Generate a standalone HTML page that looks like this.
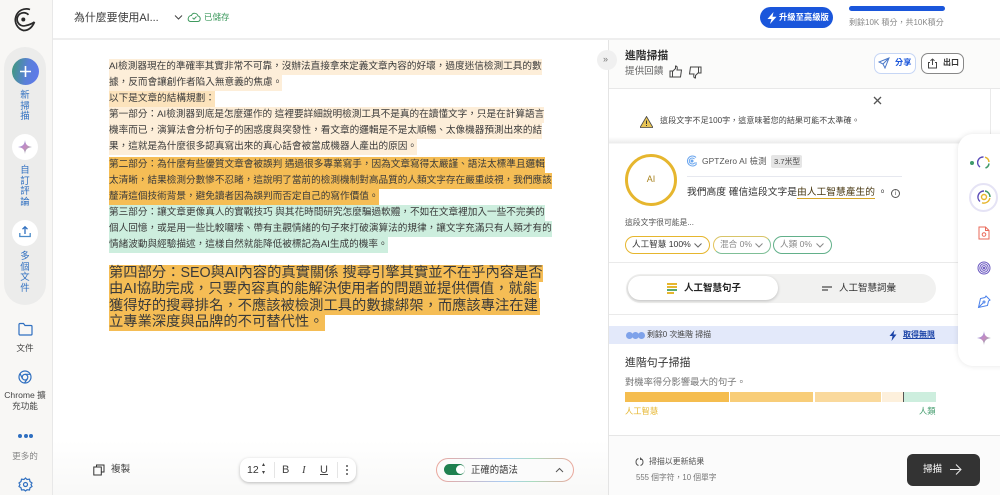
<!DOCTYPE html>
<html><head><meta charset="utf-8">
<style>
*{margin:0;padding:0;box-sizing:border-box}
html,body{width:1000px;height:495px;overflow:hidden;background:#fff}
body{position:relative;font-family:"Liberation Sans","Noto Sans CJK TC",sans-serif;color:#333}
#w{position:absolute;left:0;top:0;width:1000px;height:495px;filter:blur(.3px);overflow:hidden}
.a{position:absolute}
.t{position:absolute;white-space:nowrap}
.l{position:absolute;left:109px;height:16px;line-height:16px;font-size:9.65px;white-space:nowrap;color:#3a3a3a}
.c{text-align:center}
.v{color:#2f6fc0;font-size:9.4px;line-height:10.7px;text-align:center;position:absolute;left:15px;width:20px}
.pill{position:absolute;top:236px;height:18px;border-radius:10px;background:#fff;font-size:8.6px;line-height:15px;white-space:nowrap;padding-left:6px}
</style></head><body><div id="w">

<!-- sidebar -->
<div class="a" style="left:0;top:0;width:53px;height:495px;background:#f8f7f5;border-right:1px solid #e8e8e8"></div>
<svg class="a" style="left:10px;top:6px" width="27" height="27" viewBox="0 0 27 27" fill="none" stroke="#2a2a2a" stroke-width="1.7"><path d="M20 3.500A11 11 0 1 0 13.500 24.500C17 24.500 21.500 23 24.500 16"/><path d="M18.500 8.800A6.600 6.600 0 1 0 16 19.500C19 19 21.500 18 24.500 16"/><circle cx="13.300" cy="13.500" r="2" fill="#2a2a2a" stroke="none"/></svg>
<div class="a" style="left:4px;top:47px;width:42px;height:258px;background:#ececeb;border-radius:21px"></div>
<div class="a" style="left:12px;top:58px;width:27px;height:27px;border-radius:50%;background:linear-gradient(100deg,#3f9a78 0%,#5a7fd8 55%,#5f78ee 100%)"></div>
<svg class="a" style="left:12px;top:58px" width="27" height="27" fill="none" stroke="#fff" stroke-width="1.600"><path d="M13.500 8v11M8 13.500h11"/></svg>
<div class="v" style="top:90px">新<br>掃<br>描</div>
<div class="a" style="left:12px;top:134px;width:26px;height:26px;border-radius:50%;background:#fff"></div>
<svg class="a" style="left:18px;top:140px" width="14" height="14" viewBox="0 0 14 14"><path d="M7 0C7.500 4.500 9 6.300 14 7C9 7.700 7.500 9.500 7 14C6.500 9.500 5 7.700 0 7C5 6.300 6.500 4.500 7 0Z" fill="url(#g)"/><defs><linearGradient id="g" x1="0" y1="0" x2="1" y2="1"><stop offset="0" stop-color="#6b9cf0"/><stop offset=".5" stop-color="#c98ac0"/><stop offset="1" stop-color="#6cc09a"/></linearGradient></defs></svg>
<div class="v" style="top:165px">自<br>訂<br>評<br>論</div>
<div class="a" style="left:12px;top:220px;width:26px;height:26px;border-radius:50%;background:#fff"></div>
<svg class="a" style="left:18px;top:225px" width="14" height="14" fill="none" stroke-width="1.300"><path d="M7 9V2M4.500 4.200L7 1.800L9.500 4.200" stroke="#2f6fc0"/><path d="M1.800 8v3.500h10.400V8" stroke="#4a8ac8"/></svg>
<div class="v" style="top:251px">多<br>個<br>文<br>件</div>
<svg class="a" style="left:17px;top:321px" width="17" height="16" fill="none" stroke="#2f6fc0" stroke-width="1.200"><path d="M2 3.500Q2 2.500 3 2.500H6.500L8 4.500H14Q15 4.500 15 5.500V13Q15 14 14 14H3Q2 14 2 13Z"/></svg>
<div class="t c" style="left:0;width:50px;top:342px;font-size:8.600px;line-height:12px;color:#444">文件</div>
<svg class="a" style="left:18px;top:370px" width="15" height="15" fill="none" stroke="#2f6fc0" stroke-width="1.200"><circle cx="7" cy="7" r="6"/><circle cx="7" cy="7.200" r="2.800"/><path d="M7 4.300H12.500M4.500 8.700L2 3.500M9.400 8.800L6.500 13"/></svg>
<div class="t c" style="left:0;width:50px;top:390px;font-size:8.600px;line-height:11px;color:#444">Chrome 擴<br>充功能</div>
<div class="a" style="left:18px;top:434px;width:4px;height:4px;border-radius:50%;background:#2f6fc0"></div>
<div class="a" style="left:23.500px;top:434px;width:4px;height:4px;border-radius:50%;background:#2f6fc0"></div>
<div class="a" style="left:29px;top:434px;width:4px;height:4px;border-radius:50%;background:#2f6fc0"></div>
<div class="t c" style="left:0;width:50px;top:450px;font-size:8.600px;line-height:12px;color:#888">更多的</div>
<svg class="a" style="left:18px;top:477px" width="15" height="15" fill="none" stroke="#2f6fc0" stroke-width="1.200"><path d="M7.500 1L9 2.500L11.500 2.200L12 4.500L14 6L13 7.500L14 9.500L12 10.800L11.500 13L9 12.800L7.500 14L6 12.800L3.500 13L3 10.800L1 9.500L2 7.500L1 6L3 4.500L3.500 2.200L6 2.500Z"/><circle cx="7.500" cy="7.500" r="2"/></svg>

<!-- header -->
<div class="a" style="left:53px;top:38px;width:947px;height:2px;background:#eeeeee"></div>
<div class="t" style="left:74px;top:9px;font-size:10.900px;line-height:18px;color:#3a3a3a">為什麼要使用AI...</div>
<svg class="a" style="left:174px;top:14px" width="9" height="7" fill="none" stroke="#444" stroke-width="1"><path d="M1 1.500L4.500 5L8 1.500"/></svg>
<svg class="a" style="left:187px;top:12px" width="14" height="11" fill="none" stroke="#3f9a5f" stroke-width="1"><path d="M3.500 9.500H10.500C14 9.500 14 4.500 11 4C10 0.500 5.500 0.500 4.500 3.500C0.500 3.500 0 9.500 3.500 9.500Z"/><path d="M5.500 5.800L7 7.200L9.500 4.500"/></svg>
<div class="t" style="left:204px;top:11px;font-size:8.500px;line-height:12px;color:#3f9a5f">已儲存</div>
<div class="a" style="left:760px;top:7px;width:73px;height:21px;border-radius:11px;background:#1a56db"></div>
<svg class="a" style="left:767px;top:12px" width="10" height="12"><path d="M6.500 0L0.500 7H4.500L3 12L9.500 4.800H5.500Z" fill="#fff"/></svg>
<div class="t" style="left:779px;top:11px;font-size:8.300px;line-height:12px;color:#fff;font-weight:bold">升級至高級版</div>
<div class="a" style="left:849px;top:6px;width:96px;height:5px;border-radius:3px;background:#1a56db"></div>
<div class="t" style="left:849px;top:17px;font-size:8px;line-height:12px;color:#888">剩餘10K 積分，共10K積分</div>

<!-- editor -->
<div class="a" style="left:53px;top:440px;width:555px;height:55px;background:linear-gradient(#fff,#f8f8f7)"></div>
<div class="l" style="top:59px;background:#fdeed9">AI檢測器現在的準確率其實非常不可靠，沒辦法直接拿來定義文章內容的好壞，過度迷信檢測工具的數</div>
<div class="l" style="top:75px;background:#fdeed9">據，反而會讓創作者陷入無意義的焦慮。</div>
<div class="l" style="top:91px;background:#fce3bc">以下是文章的結構規劃：</div>
<div class="l" style="top:107px;background:#fdeed9">第一部分：AI檢測器到底是怎麼運作的 這裡要詳細說明檢測工具不是真的在讀懂文字，只是在計算語言</div>
<div class="l" style="top:123px;background:#fdeed9">機率而已，演算法會分析句子的困惑度與突發性，看文章的邏輯是不是太順暢、太像機器預測出來的結</div>
<div class="l" style="top:139px;background:#fdeed9">果，這就是為什麼很多認真寫出來的真心話會被當成機器人產出的原因。</div>
<div class="l" style="top:157px;background:#f5bd55">第二部分：為什麼有些優質文章會被誤判 遇過很多專業寫手，因為文章寫得太嚴謹、語法太標準且邏輯</div>
<div class="l" style="top:173px;background:#f5bd55">太清晰，結果檢測分數慘不忍睹，這說明了當前的檢測機制對高品質的人類文字存在嚴重歧視，我們應該</div>
<div class="l" style="top:189px;background:#f5bd55">釐清這個技術背景，避免讀者因為誤判而否定自己的寫作價值。</div>
<div class="l" style="top:205px;background:#cdeede">第三部分：讓文章更像真人的實戰技巧 與其花時間研究怎麼騙過軟體，不如在文章裡加入一些不完美的</div>
<div class="l" style="top:221px;background:#cdeede">個人回憶，或是用一些比較囉嗦、帶有主觀情緒的句子來打破演算法的規律，讓文字充滿只有人類才有的</div>
<div class="l" style="top:237px;background:#cdeede">情緒波動與經驗描述，這樣自然就能降低被標記為AI生成的機率。</div>
<div class="a" style="left:109px;top:265px;width:434px;height:16.500px;background:#f5bd55"></div>
<div class="a" style="left:109px;top:281px;width:430px;height:17px;background:#f5bd55"></div>
<div class="a" style="left:109px;top:298px;width:431px;height:17px;background:#f5bd55"></div>
<div class="a" style="left:109px;top:315px;width:216px;height:16px;background:#f5bd55"></div>
<div class="t" style="left:109px;top:265px;font-size:14.300px;line-height:16.400px;color:#3a3a3a">第四部分：SEO與AI內容的真實關係 搜尋引擎其實並不在乎內容是否<br>由AI協助完成，只要內容真的能解決使用者的問題並提供價值，就能<br>獲得好的搜尋排名，不應該被檢測工具的數據綁架，而應該專注在建<br>立專業深度與品牌的不可替代性。</div>

<!-- editor bottom -->
<svg class="a" style="left:93px;top:464px" width="12" height="12" fill="none" stroke="#333" stroke-width="1"><rect x=".8" y="3" width="7.500" height="8"/><path d="M3.500 3V1H11V8H8.300"/></svg>
<div class="t" style="left:111px;top:463px;font-size:9.600px;line-height:13px;color:#444">複製</div>
<div class="a" style="left:240px;top:458px;width:116px;height:24px;border-radius:9px;background:#fff;box-shadow:0 1px 3px rgba(0,0,0,.25)"></div>
<div class="t" style="left:247px;top:463px;font-size:10.500px;line-height:14px;color:#333">12</div>
<div class="t" style="left:262px;top:462px;font-size:6px;line-height:7.500px;color:#444">▴<br>▾</div>
<div class="a" style="left:274px;top:462px;width:1px;height:16px;background:#e5e5e5"></div>
<div class="t" style="left:282px;top:463px;font-size:11px;line-height:14px;color:#444">B</div>
<div class="t" style="left:302px;top:463px;font-size:11px;line-height:14px;color:#444;font-style:italic;font-family:'Liberation Serif',serif">I</div>
<div class="t" style="left:320px;top:463px;font-size:11px;line-height:14px;color:#444;text-decoration:underline">U</div>
<div class="a" style="left:337px;top:462px;width:1px;height:16px;background:#e5e5e5"></div>
<div class="a" style="left:346px;top:465px;width:2px;height:2px;background:#555;border-radius:50%"></div>
<div class="a" style="left:346px;top:469px;width:2px;height:2px;background:#555;border-radius:50%"></div>
<div class="a" style="left:346px;top:473px;width:2px;height:2px;background:#555;border-radius:50%"></div>
<div class="a" style="left:436px;top:458px;width:138px;height:24px;border-radius:12px;padding:1px;background:linear-gradient(90deg,#eba79c,#a9cdf5 50%,#a9dcc0 70%,#eba79c)"><div style="width:100%;height:100%;border-radius:11px;background:#fbfbfb"></div></div>
<div class="a" style="left:444px;top:464px;width:21px;height:11px;border-radius:6px;background:#1f8050"></div>
<div class="a" style="left:456px;top:465px;width:9px;height:9px;border-radius:50%;background:#fff"></div>
<div class="t" style="left:471px;top:463px;font-size:9.400px;line-height:14px;color:#333">正確的語法</div>
<svg class="a" style="left:555px;top:467px" width="9" height="6" fill="none" stroke="#555" stroke-width="1"><path d="M1 5L4.500 1.500L8 5"/></svg>

<!-- right panel -->
<div class="a" style="left:608px;top:40px;width:392px;height:455px;background:#fff;border-left:1px solid #e4e4e4"></div>
<div class="a" style="left:609px;top:40px;width:391px;height:49px;background:#fbfbfa;border-bottom:1px solid #e8e8e8"></div>
<div class="a" style="left:990px;top:89px;width:1px;height:46px;background:#eaeaea"></div>
<div class="a" style="left:597px;top:50px;width:20px;height:20px;border-radius:50%;background:#f0f0f0"></div>
<div class="t" style="left:603px;top:53px;font-size:9px;line-height:13px;color:#777">»</div>
<div class="t" style="left:625px;top:47px;font-size:10.800px;line-height:18px;color:#333;font-weight:bold">進階掃描</div>
<div class="t" style="left:625px;top:64px;font-size:9.600px;line-height:15px;color:#666">提供回饋</div>
<svg class="a" style="left:669px;top:65px" width="14" height="13" fill="none" stroke="#444" stroke-width="1"><path d="M1 6H3.500V12H1ZM3.500 6.500L6.500 3.500V1C8.500 1 8.500 3 8 5H12.500L11.500 12H3.500"/></svg>
<svg class="a" style="left:688px;top:66px" width="14" height="13" fill="none" stroke="#444" stroke-width="1"><path d="M13 7H10.500V1H13ZM10.500 6.500L7.500 9.500V12C5.500 12 5.500 10 6 8H1.500L2.500 1H10.500"/></svg>
<div class="a" style="left:874px;top:53px;width:42px;height:21px;border-radius:7px;border:1px solid #c6d6f5;background:#fff"></div>
<svg class="a" style="left:878px;top:57px" width="12" height="12" fill="none" stroke="#4a78c8" stroke-width="1"><path d="M11 1L1 5L5 7L7 11ZM11 1L5 7"/></svg>
<div class="t" style="left:895px;top:57px;font-size:8.200px;line-height:12px;color:#1a56db;font-weight:bold">分享</div>
<div class="a" style="left:921px;top:53px;width:43px;height:21px;border-radius:7px;border:1px solid #888;background:#fff"></div>
<svg class="a" style="left:927px;top:58px" width="11" height="11" fill="none" stroke="#444" stroke-width="1"><path d="M5.500 7V1M3.500 2.800L5.500 1L7.500 2.800M3 4.500H1.500V10H9.500V4.500H8"/></svg>
<div class="t" style="left:943px;top:57px;font-size:8px;line-height:12px;color:#333;font-weight:bold">出口</div>

<svg class="a" style="left:873px;top:96px" width="9" height="9" stroke="#555" stroke-width="1.300"><path d="M1 1L8 8M8 1L1 8"/></svg>
<svg class="a" style="left:640px;top:116px" width="13" height="12"><path d="M6.500 .5L13 11.500H0Z" fill="#e8c454" stroke="#444" stroke-width=".8"/><path d="M6.500 4.500V8M6.500 9V10" stroke="#333" stroke-width="1"/></svg>
<div class="t" style="left:660px;top:114px;font-size:8.100px;line-height:13px;color:#444">這段文字不足100字，這意味著您的結果可能不太準確。</div>
<div class="a" style="left:609px;top:137px;width:391px;height:7px;background:linear-gradient(#fff,#ececec 85%,#fff)"></div>

<div class="a" style="left:625px;top:154px;width:52px;height:52px;border-radius:50%;border:3px solid #e6b62e;background:#fff"></div>
<div class="t c" style="left:625px;top:172px;width:52px;font-size:9px;line-height:14px;color:#a98420">AI</div>
<svg class="a" style="left:686px;top:155px" width="12" height="12" fill="none" stroke="#6ba6ee" stroke-width="1"><path d="M10 2.500A5 5 0 1 0 10.500 9M8.500 4A3 3 0 1 0 8.500 8H11"/><circle cx="6" cy="6" r="1" fill="#6ba6ee"/></svg>
<div class="t" style="left:702px;top:155px;font-size:8.400px;line-height:12px;color:#555;letter-spacing:.1px">GPTZero AI 檢測</div>
<div class="a" style="left:771px;top:155px;width:31px;height:13px;background:#e5e5e5;border-radius:2px"></div>
<div class="t" style="left:774px;top:155px;font-size:7.700px;line-height:13px;color:#444">3.7米型</div>
<div class="a" style="left:687px;top:176px;width:215px;height:1px;background:#e6e8ef"></div>
<div class="t" style="left:687px;top:185px;font-size:9.750px;line-height:15px;color:#333">我們高度 確信這段文字是<span style="border-bottom:1px solid #d8a628;color:#4a3a14">由人工智慧產生的</span> 。</div>
<div class="a" style="left:891px;top:189px;width:9px;height:9px;border:1px solid #555;border-radius:50%"></div>
<div class="t c" style="left:891px;top:189px;width:9px;font-size:6.500px;line-height:9px;color:#555">i</div>
<div class="t" style="left:625px;top:217px;font-size:7.800px;line-height:12px;color:#555">這段文字很可能是...</div>
<div class="pill" style="left:625px;width:85px;border:1.300px solid #e6b62e;color:#333">人工智慧 100%</div>
<svg class="a" style="left:694px;top:243px" width="8" height="5" fill="none" stroke="#666"><path d="M.5 .5L4 4L7.500 .5"/></svg>
<div class="pill" style="left:713px;width:58px;border:1.300px solid;border-color:#d8c468 #7fbf97 #7fbf97 #e3c45c;color:#888">混合 0%</div>
<svg class="a" style="left:755px;top:243px" width="8" height="5" fill="none" stroke="#888"><path d="M.5 .5L4 4L7.500 .5"/></svg>
<div class="pill" style="left:773px;width:59px;border:1.300px solid #62b08a;color:#888">人類 0%</div>
<svg class="a" style="left:816px;top:243px" width="8" height="5" fill="none" stroke="#888"><path d="M.5 .5L4 4L7.500 .5"/></svg>
<div class="a" style="left:609px;top:262px;width:391px;height:1px;background:#eaeaea"></div>

<div class="a" style="left:626px;top:274px;width:310px;height:29px;border-radius:15px;background:#f1f1f0"></div>
<div class="a" style="left:628px;top:276px;width:150px;height:24px;border-radius:12px;background:#fff;box-shadow:0 1px 3px rgba(0,0,0,.22)"></div>
<div class="a" style="left:667px;top:283px;width:10px;height:2px;background:#e6b62e"></div>
<div class="a" style="left:667px;top:286px;width:10px;height:2px;background:#e6b62e"></div>
<div class="a" style="left:667px;top:289px;width:10px;height:2px;background:#5aaa72"></div>
<div class="a" style="left:667px;top:292px;width:7px;height:1.500px;background:#e6b62e"></div>
<div class="t" style="left:684px;top:281px;font-size:9.500px;line-height:15px;color:#222;font-weight:bold">人工智慧句子</div>
<div class="a" style="left:822px;top:286px;width:10px;height:1.500px;background:#888"></div>
<div class="a" style="left:822px;top:289px;width:6px;height:1.500px;background:#888"></div>
<div class="t" style="left:839px;top:281px;font-size:9.500px;line-height:15px;color:#333">人工智慧詞彙</div>
<div class="a" style="left:609px;top:314px;width:391px;height:1px;background:#eaeaea"></div>

<div class="a" style="left:609px;top:326px;width:391px;height:18px;background:#e3e9fa"></div>
<div class="a" style="left:626px;top:332px;width:7px;height:7px;border-radius:50%;background:#7ea2ea"></div>
<div class="a" style="left:632px;top:332px;width:7px;height:7px;border-radius:50%;background:#7ea2ea"></div>
<div class="a" style="left:638px;top:332px;width:7px;height:7px;border-radius:50%;background:#7ea2ea"></div>
<div class="t" style="left:647px;top:329px;font-size:7.900px;line-height:12px;color:#444">剩餘0 次進階 掃描</div>
<svg class="a" style="left:889px;top:330px" width="8" height="11"><path d="M5.500 0L0.500 6H3.500L2.500 11L7.500 4.500H4.500Z" fill="#1c44a8"/></svg>
<div class="t" style="left:903px;top:329px;font-size:8px;line-height:12px;color:#1c44a8;text-decoration:underline;font-weight:bold">取得無限</div>

<div class="t" style="left:625px;top:355px;font-size:10.900px;line-height:17px;color:#333">進階句子掃描</div>
<div class="t" style="left:625px;top:375px;font-size:9.300px;line-height:14px;color:#777">對機率得分影響最大的句子。</div>
<div class="a" style="left:625px;top:392px;width:104px;height:10px;background:#f5bd4f"></div>
<div class="a" style="left:730px;top:392px;width:83px;height:10px;background:#f8cd78"></div>
<div class="a" style="left:815px;top:392px;width:66px;height:10px;background:#fad99c"></div>
<div class="a" style="left:882px;top:392px;width:21px;height:10px;background:#fdf0dc"></div>
<div class="a" style="left:903px;top:392px;width:1px;height:10px;background:#555"></div>
<div class="a" style="left:904px;top:392px;width:32px;height:10px;background:#cdeede"></div>
<div class="t" style="left:625px;top:405px;font-size:8.300px;line-height:12px;color:#e6b62e">人工智慧</div>
<div class="t" style="left:919px;top:405px;font-size:8.300px;line-height:12px;color:#3f9a6a">人類</div>
<div class="a" style="left:609px;top:435px;width:391px;height:60px;background:#fbfbfb;border-top:1px solid #e6e6e6"></div>
<svg class="a" style="left:635px;top:457px" width="9" height="10" fill="none" stroke="#555" stroke-width="1"><path d="M3.500 1.500A3.700 3.700 0 0 0 3.500 8.500M5.500 1.500A3.700 3.700 0 0 1 5.500 8.500M5.500 .5V2.500H7.500"/></svg>
<div class="t" style="left:649px;top:456px;font-size:7.900px;line-height:12px;color:#555">掃描以更新結果</div>
<div class="t" style="left:636px;top:472px;font-size:7.800px;line-height:12px;color:#777">555 個字符，10 個單字</div>
<div class="a" style="left:907px;top:454px;width:73px;height:32px;border-radius:6px;background:#333"></div>
<div class="t" style="left:923px;top:462px;font-size:9.500px;line-height:15px;color:#fff">掃描</div>
<svg class="a" style="left:949px;top:463px" width="13" height="13" fill="none" stroke="#eee" stroke-width="1"><path d="M1 6.500H11.500M7 1.500L12 6.500L7 11.500"/></svg>

<!-- floating tools -->
<div class="a" style="left:958px;top:134px;width:60px;height:232px;border-radius:15px;background:#fff;box-shadow:0 0 6px rgba(0,0,0,.1)"></div>
<div class="a" style="left:970px;top:161px;width:4px;height:4px;border-radius:50%;background:#3f9a6a"></div>
<svg class="a" style="left:977px;top:156px" width="13" height="13" fill="none" stroke-width="1.500"><path d="M6.500 1A5.500 5.500 0 0 0 3 11" stroke="#5a4bb8"/><path d="M8 1.200A5.500 5.500 0 0 1 12 6" stroke="#e6b62e"/><path d="M12 7.500A5.500 5.500 0 0 1 8.500 12" stroke="#3f9a6a"/></svg>
<div class="a" style="left:969px;top:183px;width:29px;height:29px;border-radius:50%;border:2px solid #e5e3f5;background:#fff"></div>
<svg class="a" style="left:977px;top:190px" width="14" height="14" fill="none" stroke-width="1.400"><path d="M7 1A6 6 0 0 0 3 11.500" stroke="#5a4bb8"/><path d="M8 1A6 6 0 0 1 13 7" stroke="#3f9a6a"/><path d="M12.800 8A6 6 0 0 1 5 12.800" stroke="#e6b62e"/><circle cx="7" cy="7" r="2.500" stroke="#e6b62e"/></svg>
<svg class="a" style="left:978px;top:226px" width="12" height="14" fill="none" stroke="#ea6a5a" stroke-width="1"><path d="M1 1H7.500L11 4.500V13H1ZM7.500 1V4.500H11"/><circle cx="6" cy="8.500" r="1.800"/></svg>
<svg class="a" style="left:977px;top:261px" width="14" height="14" fill="none" stroke="#6a58c0" stroke-width="1"><circle cx="7" cy="7" r="6"/><circle cx="7" cy="7" r="4.200"/><circle cx="7" cy="7" r="2.400"/><circle cx="7" cy="7" r=".8"/></svg>
<svg class="a" style="left:977px;top:295px" width="14" height="14" fill="none" stroke="#4a80ea" stroke-width="1"><path d="M9 1L13 5L11.500 6L10.500 10.500L1.500 12.500L3.500 3.500L8 2.500ZM1.500 12.500L6 8"/><circle cx="7" cy="7" r="1"/></svg>
<svg class="a" style="left:977px;top:331px" width="14" height="14" viewBox="0 0 14 14"><path d="M7 0C7.500 4.500 9 6.300 14 7C9 7.700 7.500 9.500 7 14C6.500 9.500 5 7.700 0 7C5 6.300 6.500 4.500 7 0Z" fill="url(#g)"/></svg>

</div></body></html>
